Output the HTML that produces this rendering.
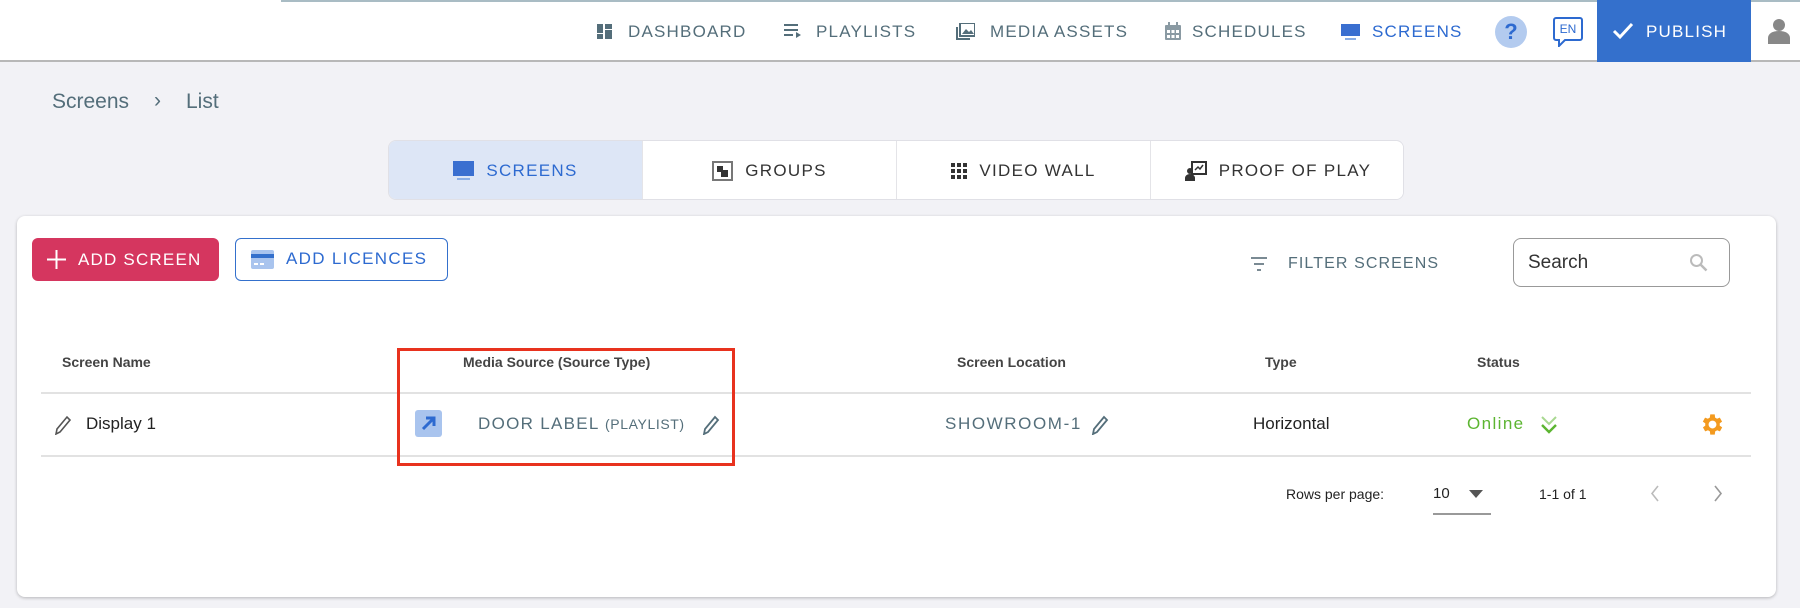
<!DOCTYPE html>
<html><head><meta charset="utf-8"><style>
*{margin:0;padding:0;box-sizing:border-box}
body{width:1800px;height:608px;background:#f2f2f6;font-family:"Liberation Sans",sans-serif;position:relative;overflow:hidden}
.a{position:absolute;white-space:nowrap}
.hdr{position:absolute;left:0;top:0;width:1800px;height:62px;background:#fff;border-bottom:2px solid #b8b8b8}
.nav{position:absolute;top:21px;font-size:17px;letter-spacing:1.2px;color:#546e7a;line-height:22px}
.tab{position:absolute;top:140px;height:60px;width:254px;background:#fff;border-right:1px solid #e4e4e8;font-size:17px;letter-spacing:1.3px;color:#333;display:flex;align-items:center;justify-content:center;gap:12px}
.th{position:absolute;top:354px;font-size:14px;font-weight:bold;color:#444}
.cell{position:absolute;top:414px;font-size:17px;line-height:20px}
</style></head><body>
<div class="hdr"></div>
<div class="a" style="left:281px;top:0;width:1519px;height:2px;background:#a9bcc4"></div>

<svg class="a" style="left:597px;top:24px" width="15" height="15" viewBox="0 0 15 15" fill="#546e7a"><rect x="0" y="0" width="6" height="9"/><rect x="0" y="10" width="6" height="5"/><rect x="8" y="0" width="7" height="5"/><rect x="8" y="6" width="7" height="9"/></svg>
<div class="nav" style="left:628px">DASHBOARD</div>
<svg class="a" style="left:784px;top:24px" width="18" height="14" viewBox="0 0 18 14" fill="#546e7a"><rect x="0" y="0" width="14" height="2"/><rect x="0" y="5" width="14" height="2"/><rect x="0" y="10" width="9" height="2"/><path d="M12 8l5 3-5 3z"/></svg>
<div class="nav" style="left:816px">PLAYLISTS</div>
<svg class="a" style="left:956px;top:23px" width="19" height="17" viewBox="0 0 19 17" fill="#546e7a"><rect x="4" y="0" width="15" height="13" fill="none" stroke="#546e7a" stroke-width="2"/><path d="M6 11l4-5 3 3 2-2 3 4z"/><rect x="0" y="4" width="2" height="13"/><rect x="0" y="15" width="14" height="2"/></svg>
<div class="nav" style="left:990px">MEDIA ASSETS</div>
<svg class="a" style="left:1165px;top:22px" width="16" height="18" viewBox="0 0 16 18" fill="#8a9aa3"><rect x="0" y="3" width="16" height="15" rx="1"/><rect x="3" y="0" width="2" height="4"/><rect x="11" y="0" width="2" height="4"/><g fill="#fff"><rect x="2" y="8" width="3" height="3"/><rect x="6.5" y="8" width="3" height="3"/><rect x="11" y="8" width="3" height="3"/><rect x="2" y="13" width="3" height="3"/><rect x="6.5" y="13" width="3" height="3"/><rect x="11" y="13" width="3" height="3"/></g></svg>
<div class="nav" style="left:1192px">SCHEDULES</div>
<svg class="a" style="left:1341px;top:24px" width="19" height="16" viewBox="0 0 19 16"><rect x="0" y="0" width="19" height="12" fill="#3a6fd0"/><rect x="4" y="14" width="11" height="2" fill="#8aaee6"/></svg>
<div class="nav" style="left:1372px;color:#2d6ad0">SCREENS</div>
<div class="a" style="left:1495px;top:16px;width:32px;height:32px;border-radius:50%;background:#b3cbef;color:#2d6ad0;font-size:22px;font-weight:bold;text-align:center;line-height:32px">?</div>
<svg class="a" style="left:1553px;top:16px" width="30" height="31" viewBox="0 0 30 31"><path d="M3 2h24a2 2 0 0 1 2 2v18a2 2 0 0 1-2 2H12l-6 6v-6H3a2 2 0 0 1-2-2V4a2 2 0 0 1 2-2z" fill="#fff" stroke="#2d6ad0" stroke-width="2"/><text x="15" y="17" font-family="Liberation Sans" font-size="12" fill="#2d6ad0" text-anchor="middle">EN</text></svg>
<div class="a" style="left:1597px;top:0;width:154px;height:62px;background:#3470cc"></div>
<svg class="a" style="left:1612px;top:22px" width="22" height="18" viewBox="0 0 22 18"><path d="M2 9l6 6L20 2" fill="none" stroke="#fff" stroke-width="3"/></svg>
<div class="nav" style="left:1646px;color:#fff">PUBLISH</div>
<svg class="a" style="left:1768px;top:18px" width="22" height="26" viewBox="0 0 22 26" fill="#888"><circle cx="11" cy="7" r="6"/><path d="M0 26v-6c0-4 4-7 11-7s11 3 11 7v6z"/></svg>

<div class="a" style="left:52px;top:90px;font-size:21px;color:#546e7a">Screens</div>
<div class="a" style="left:154px;top:89px;font-size:21px;color:#546e7a">›</div>
<div class="a" style="left:186px;top:90px;font-size:21px;color:#546e7a">List</div>

<div class="a" style="left:388px;top:140px;width:1016px;height:60px;border-radius:8px;background:#fff;border:1px solid #e0e0e6;overflow:hidden">
<div class="tab" style="left:0;top:0;background:#dde6f6;color:#2d6ad0"><svg width="21" height="20" viewBox="0 0 21 20"><rect x="0" y="0" width="21" height="15" fill="#3a6fd0"/><rect x="4" y="17" width="13" height="2" fill="#8aaee6"/></svg>SCREENS</div>
<div class="tab" style="left:254px;top:0"><svg width="21" height="20" viewBox="0 0 21 20"><rect x="1" y="1" width="19" height="18" fill="none" stroke="#777" stroke-width="2"/><rect x="5" y="5" width="6" height="6" fill="#333"/><rect x="9" y="9" width="7" height="7" fill="#333"/></svg>GROUPS</div>
<div class="tab" style="left:508px;top:0"><svg width="16" height="16" viewBox="0 0 16 16" fill="#333"><rect x="0" y="0" width="4" height="4"/><rect x="6" y="0" width="4" height="4"/><rect x="12" y="0" width="4" height="4"/><rect x="0" y="6" width="4" height="4"/><rect x="6" y="6" width="4" height="4"/><rect x="12" y="6" width="4" height="4"/><rect x="0" y="12" width="4" height="4"/><rect x="6" y="12" width="4" height="4"/><rect x="12" y="12" width="4" height="4"/></svg>VIDEO WALL</div>
<div class="tab" style="left:762px;top:0;border-right:none"><svg width="22" height="20" viewBox="0 0 22 20"><rect x="7" y="1" width="14" height="12" fill="none" stroke="#333" stroke-width="2"/><path d="M10 9l3-3 2 2 3-4" fill="none" stroke="#333" stroke-width="1.5"/><circle cx="5" cy="10" r="3" fill="#333"/><path d="M0 20v-3c0-2 2-4 5-4s5 2 5 4v3z" fill="#333"/></svg>PROOF OF PLAY</div>
</div>

<div class="a" style="left:17px;top:216px;width:1759px;height:381px;background:#fff;border-radius:8px;box-shadow:0 1px 3px rgba(0,0,0,.25)"></div>
<div class="a" style="left:32px;top:238px;width:187px;height:43px;background:#d5365f;border-radius:6px;color:#fff;font-size:17px;letter-spacing:1.2px;line-height:43px;padding-left:46px">ADD SCREEN</div>
<svg class="a" style="left:47px;top:250px" width="19" height="19" viewBox="0 0 19 19"><path d="M9.5 0v19M0 9.5h19" stroke="#fff" stroke-width="2"/></svg>
<div class="a" style="left:235px;top:238px;width:213px;height:43px;border:1.5px solid #3470cc;border-radius:6px;color:#2d6ad0;font-size:17px;letter-spacing:1.3px;line-height:40px;padding-left:50px">ADD LICENCES</div>
<svg class="a" style="left:251px;top:250px" width="23" height="19" viewBox="0 0 23 19"><rect x="0" y="0" width="23" height="19" rx="2" fill="#a9c4ee"/><rect x="0" y="4" width="23" height="4" fill="#3470cc"/><rect x="3" y="13" width="4" height="2" fill="#fff"/><rect x="9" y="13" width="4" height="2" fill="#fff"/></svg>
<svg class="a" style="left:1251px;top:256px" width="16" height="16" viewBox="0 0 16 16" fill="#7a8a93"><rect x="0" y="1" width="16" height="2"/><rect x="3" y="7" width="10" height="2"/><rect x="6" y="13" width="4" height="2"/></svg>
<div class="a" style="left:1288px;top:255px;font-size:16px;letter-spacing:1.1px;color:#546e7a">FILTER SCREENS</div>
<div class="a" style="left:1513px;top:238px;width:217px;height:49px;border:1.5px solid #999;border-radius:8px"></div>
<div class="a" style="left:1528px;top:252px;font-size:19px;color:#333">Search</div>
<svg class="a" style="left:1689px;top:253px" width="19" height="19" viewBox="0 0 19 19"><circle cx="7.5" cy="7.5" r="5.5" fill="none" stroke="#bbb" stroke-width="2"/><path d="M11.5 11.5l6 6" stroke="#bbb" stroke-width="2.5"/></svg>

<div class="th" style="left:62px">Screen Name</div>
<div class="th" style="left:463px">Media Source (Source Type)</div>
<div class="th" style="left:957px">Screen Location</div>
<div class="th" style="left:1265px">Type</div>
<div class="th" style="left:1477px">Status</div>
<div class="a" style="left:41px;top:392px;width:1710px;height:2px;background:#e2e2e2"></div>
<div class="a" style="left:41px;top:455px;width:1710px;height:2px;background:#e2e2e2"></div>

<svg class="a" style="left:53px;top:415px" width="19" height="20" viewBox="0 0 19 20"><path d="M3 19l1-5L14 2l3 3L7 17z" fill="none" stroke="#555" stroke-width="1.6"/></svg>
<div class="cell" style="left:86px;color:#222">Display 1</div>

<div class="a" style="left:397px;top:348px;width:338px;height:118px;border:3px solid #e8321e"></div>
<div class="a" style="left:415px;top:410px;width:27px;height:27px;background:#a9c4ee;border-radius:3px"></div>
<svg class="a" style="left:419px;top:414px" width="19" height="19" viewBox="0 0 19 19"><path d="M4 15L14 5M7 4h8v8" fill="none" stroke="#2d6ad0" stroke-width="3"/></svg>
<div class="cell" style="left:478px;color:#546e7a;letter-spacing:1.3px;font-size:17px">DOOR LABEL <span style="font-size:14px;letter-spacing:.6px">(PLAYLIST)</span></div>
<svg class="a" style="left:701px;top:415px" width="19" height="20" viewBox="0 0 19 20"><path d="M3 19l1-5L14 2l3 3L7 17z" fill="none" stroke="#546e7a" stroke-width="1.8"/></svg>

<div class="cell" style="left:945px;color:#546e7a;letter-spacing:1.6px">SHOWROOM-1</div>
<svg class="a" style="left:1090px;top:415px" width="19" height="20" viewBox="0 0 19 20"><path d="M3 19l1-5L14 2l3 3L7 17z" fill="none" stroke="#546e7a" stroke-width="1.8"/></svg>
<div class="cell" style="left:1253px;color:#222">Horizontal</div>
<div class="cell" style="left:1467px;color:#5cb531;letter-spacing:1.4px">Online</div>
<svg class="a" style="left:1540px;top:415px" width="18" height="20" viewBox="0 0 18 20"><path d="M2 2l7 7 7-7" fill="none" stroke="#a8d890" stroke-width="2"/><path d="M2 10l7 7 7-7" fill="none" stroke="#5cb531" stroke-width="2.4"/></svg>
<svg class="a" style="left:1699px;top:411px" width="27" height="27" viewBox="0 0 24 24"><path fill="#f39a1f" d="M19.4 13a7.5 7.5 0 0 0 0-2l2.1-1.6-2-3.5-2.5 1a7 7 0 0 0-1.7-1L15 3h-4l-.4 2.9a7 7 0 0 0-1.7 1l-2.5-1-2 3.5L6.6 11a7.5 7.5 0 0 0 0 2l-2.1 1.6 2 3.5 2.5-1a7 7 0 0 0 1.7 1L11 21h4l.4-2.9a7 7 0 0 0 1.7-1l2.5 1 2-3.5zM13 15.5a3.5 3.5 0 1 1 0-7 3.5 3.5 0 0 1 0 7z" transform="translate(-1 0)"/></svg>

<div class="a" style="left:1286px;top:486px;font-size:14px;color:#222">Rows per page:</div>
<div class="a" style="left:1433px;top:485px;font-size:15px;color:#222">10</div>
<svg class="a" style="left:1469px;top:490px" width="14" height="8" viewBox="0 0 14 8"><path d="M0 0h14L7 8z" fill="#555"/></svg>
<div class="a" style="left:1433px;top:513px;width:58px;height:1.5px;background:#999"></div>
<div class="a" style="left:1539px;top:486px;font-size:14px;color:#222">1-1 of 1</div>
<svg class="a" style="left:1650px;top:485px" width="10" height="17" viewBox="0 0 10 17"><path d="M8 1L2 8.5 8 16" fill="none" stroke="#bbb" stroke-width="1.6"/></svg>
<svg class="a" style="left:1713px;top:485px" width="10" height="17" viewBox="0 0 10 17"><path d="M2 1l6 7.5L2 16" fill="none" stroke="#999" stroke-width="1.6"/></svg>
</body></html>
